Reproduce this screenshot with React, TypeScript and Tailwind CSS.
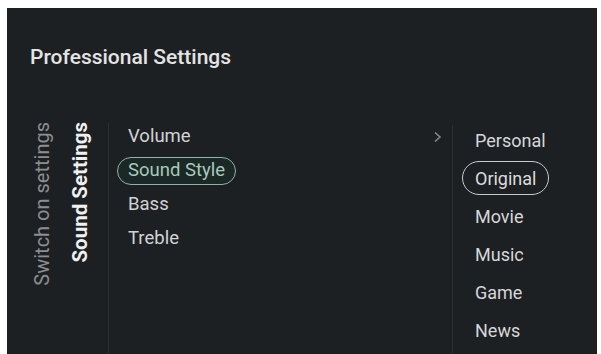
import React from "react";

const font = { fontFamily: "Roboto, 'Noto Sans', sans-serif" };

export default function App() {
  const menu = ["Volume", "Sound Style", "Bass", "Treble"];
  const styles = ["Personal", "Original", "Movie", "Music", "Game", "News"];
  return (
    <div className="w-[601px] h-[354px] bg-white overflow-hidden" style={font}>
      <div className="ml-[7px] mt-[8px] w-[590px] h-[346px] bg-[#1d2023] flex flex-col">
        <div className="pl-[23px] pt-[34px] h-[111px] text-[21px] leading-[30px] font-medium text-[#e4e4e4]">
          Professional Settings
        </div>
        <div className="flex flex-1">
          <div className="w-[101px] shrink-0 flex items-start pl-[24px] pt-[3px] gap-[16px]">
            <div
              className="text-[20px] leading-[22px] text-[#8c8e90] rotate-180"
              style={{ writingMode: "vertical-rl" }}
            >
              Switch on settings
            </div>
            <div
              className="text-[20.5px] leading-[22px] font-bold text-[#f0f0f0] rotate-180"
              style={{ writingMode: "vertical-rl" }}
            >
              Sound Settings
            </div>
          </div>
          <div className="w-px shrink-0 bg-[#2a2e32] mt-[4px]" />
          <div className="w-[343px] shrink-0 flex flex-col pt-[1px]">
            {menu.map((m, i) => (
              <div key={m} className="h-[34px] flex items-center pl-[19px] pr-[10px]">
                {i === 1 ? (
                  <span className="-ml-[11px] h-[28px] flex items-center px-[10px] border border-[#8fb3a2] rounded-full bg-[#1a2926] text-[18.5px] text-[#a8c8ba]">
                    {m}
                  </span>
                ) : (
                  <span className="text-[18.5px] text-[#d2d3d4]">{m}</span>
                )}
                {i === 0 && (
                  <svg className="ml-auto" width="9" height="12" viewBox="0 0 9 12">
                    <path d="M2 1.5 L7 6 L2 10.5" fill="none" stroke="#85888b" strokeWidth="1.6" />
                  </svg>
                )}
              </div>
            ))}
          </div>
          <div className="w-px shrink-0 bg-[#2a2e32] mt-[6px]" />
          <div className="flex-1 flex flex-col pt-[2px]">
            {styles.map((s, i) => (
              <div key={s} className="h-[38px] flex items-center pl-[22px]">
                {i === 1 ? (
                  <span className="-ml-[13px] h-[34px] flex items-center px-[12px] border-[1.5px] border-[#c9cacb] rounded-full text-[18px] text-[#dcdcdc]">
                    {s}
                  </span>
                ) : (
                  <span className="text-[18px] text-[#d6d7d8]">{s}</span>
                )}
              </div>
            ))}
          </div>
        </div>
      </div>
    </div>
  );
}
